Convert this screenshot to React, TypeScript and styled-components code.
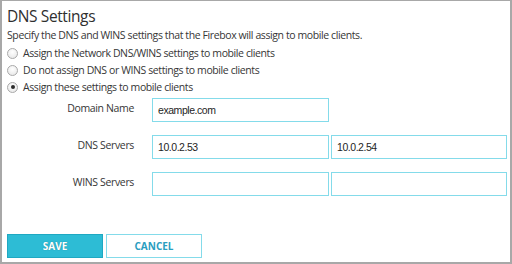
import React, { useState } from "react";
import styled, { createGlobalStyle } from "styled-components";

const GlobalStyle = createGlobalStyle`
    html, body {
        margin: 0;
        padding: 0;
        background: #ffffff;
    }
    * {
        box-sizing: border-box;
    }
`;

const Panel = styled.div`
    width: 512px;
    height: 264px;
    border-top: 1px solid #a8a8a8;
    border-left: 2px solid #a8a8a8;
    border-right: 2px solid #a8a8a8;
    border-bottom: 2px solid #a8a8a8;
    padding: 5px 5px 0 5px;
    font-family: "Open Sans", "Noto Sans", sans-serif;
    color: #363636;
    background: #fff;
`;

const Title = styled.h1`
    margin: 0;
    font-size: 15.5px;
    font-weight: 400;
    letter-spacing: -0.4px;
    line-height: 20px;
    color: #2f2f2f;
`;

const Description = styled.p`
    margin: 1px 0 1px;
    font-size: 10.5px;
    letter-spacing: -0.4px;
    line-height: 16px;
`;

const RadioList = styled.div`
    display: flex;
    flex-direction: column;
`;

const RadioRow = styled.label`
    display: flex;
    align-items: center;
    gap: 5px;
    height: 17px;
    font-size: 10.5px;
    letter-spacing: -0.4px;
    cursor: pointer;
`;

const RadioDot = styled.span<{ $checked: boolean }>`
    width: 11px;
    height: 11px;
    margin-top: 1px;
    border-radius: 50%;
    border: 1px solid #a9a9a9;
    background: radial-gradient(circle at 50% 35%, #ffffff 0%, #e4e4e4 100%);
    display: flex;
    align-items: center;
    justify-content: center;
    flex-shrink: 0;
    &::after {
        content: "";
        width: 4px;
        height: 4px;
        border-radius: 50%;
        background: #2b2b2b;
        display: ${(p) => (p.$checked ? "block" : "none")};
    }
`;

const FormGrid = styled.div`
    display: grid;
    grid-template-columns: 143px 177px 176px;
    column-gap: 2px;
    row-gap: 13px;
    margin-top: 3px;
`;

const FieldLabel = styled.div`
    font-size: 10.5px;
    letter-spacing: -0.35px;
    line-height: 20px;
    text-align: right;
    padding-right: 16px;
    color: #363636;
`;

const TextInput = styled.input`
    height: 24px;
    border: 1.5px solid #84dbea;
    padding: 0 5px;
    font-family: "Liberation Sans", Arial, sans-serif;
    font-size: 10.5px;
    letter-spacing: -0.45px;
    color: #1e1e1e;
    outline: none;
    background: #fff;
    width: 100%;
`;

const ButtonRow = styled.div`
    display: flex;
    gap: 3px;
    margin-top: 38px;
`;

const Button = styled.button<{ $primary?: boolean }>`
    width: 96px;
    height: 24px;
    padding: 0;
    font-family: "Open Sans", "Noto Sans", sans-serif;
    font-size: 10px;
    font-weight: 700;
    letter-spacing: 0;
    text-transform: uppercase;
    cursor: pointer;
    border: 1px solid ${(p) => (p.$primary ? "#1fa8c2" : "#84dbea")};
    background: ${(p) => (p.$primary ? "#2dbcd5" : "#ffffff")};
    color: ${(p) => (p.$primary ? "#ffffff" : "#2a9dbf")};
    text-shadow: ${(p) => (p.$primary ? "0 0 1px #1b7f93" : "none")};
`;

const options = [
    "Assign the Network DNS/WINS settings to mobile clients",
    "Do not assign DNS or WINS settings to mobile clients",
    "Assign these settings to mobile clients",
];

const App: React.FC = () => {
    const [choice, setChoice] = useState(2);

    return (
        <Panel>
            <GlobalStyle />
            <Title>DNS Settings</Title>
            <Description>
                Specify the DNS and WINS settings that the Firebox will assign to mobile clients.
            </Description>
            <RadioList>
                {options.map((text, i) => (
                    <RadioRow key={text} onClick={() => setChoice(i)}>
                        <RadioDot $checked={choice === i} />
                        {text}
                    </RadioRow>
                ))}
            </RadioList>
            <FormGrid>
                <FieldLabel>Domain Name</FieldLabel>
                <TextInput defaultValue="example.com" />
                <div />
                <FieldLabel>DNS Servers</FieldLabel>
                <TextInput defaultValue="10.0.2.53" />
                <TextInput defaultValue="10.0.2.54" />
                <FieldLabel>WINS Servers</FieldLabel>
                <TextInput />
                <TextInput />
            </FormGrid>
            <ButtonRow>
                <Button $primary>Save</Button>
                <Button>Cancel</Button>
            </ButtonRow>
        </Panel>
    );
};

export default App;
